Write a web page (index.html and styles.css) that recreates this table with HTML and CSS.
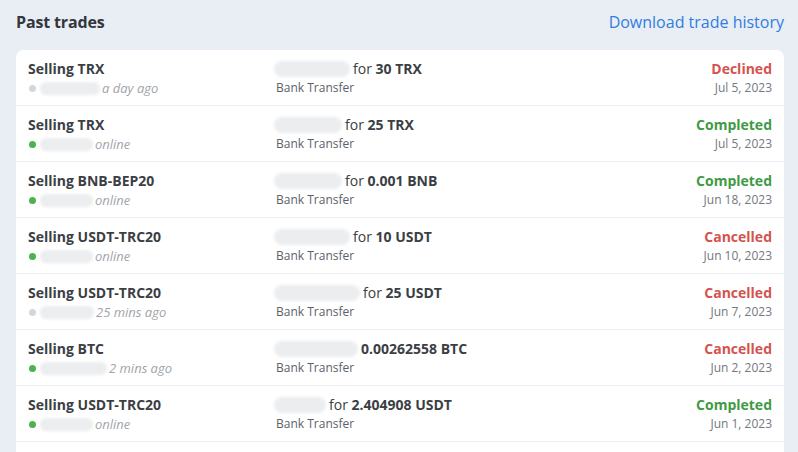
FILE: index.html
```html
<!DOCTYPE html>
<html>
<head>
<meta charset="utf-8">
<link rel="stylesheet" href="styles.css">
</head>
<body>
<div class="page">
  <div class="header">
    <h2 class="title">Past trades</h2>
    <a class="download">Download trade history</a>
  </div>
  <div class="card">
    <div class="row">
      <div class="col-a">
        <div class="pair">Selling TRX</div>
        <div class="user"><span class="dot off"></span><span class="blur" style="width:60px"></span><span class="seen">a day ago</span></div>
      </div>
      <div class="col-b">
        <div class="amount"><span class="blur big" style="width:76px"></span>for <b>30 TRX</b></div>
        <div class="method">Bank Transfer</div>
      </div>
      <div class="col-c">
        <div class="status red">Declined</div>
        <div class="date">Jul 5, 2023</div>
      </div>
    </div>
    <div class="row">
      <div class="col-a">
        <div class="pair">Selling TRX</div>
        <div class="user"><span class="dot on"></span><span class="blur" style="width:53px"></span><span class="seen">online</span></div>
      </div>
      <div class="col-b">
        <div class="amount"><span class="blur big" style="width:68px"></span>for <b>25 TRX</b></div>
        <div class="method">Bank Transfer</div>
      </div>
      <div class="col-c">
        <div class="status green">Completed</div>
        <div class="date">Jul 5, 2023</div>
      </div>
    </div>
    <div class="row">
      <div class="col-a">
        <div class="pair">Selling BNB-BEP20</div>
        <div class="user"><span class="dot on"></span><span class="blur" style="width:53px"></span><span class="seen">online</span></div>
      </div>
      <div class="col-b">
        <div class="amount"><span class="blur big" style="width:68px"></span>for <b>0.001 BNB</b></div>
        <div class="method">Bank Transfer</div>
      </div>
      <div class="col-c">
        <div class="status green">Completed</div>
        <div class="date">Jun 18, 2023</div>
      </div>
    </div>
    <div class="row">
      <div class="col-a">
        <div class="pair">Selling USDT-TRC20</div>
        <div class="user"><span class="dot on"></span><span class="blur" style="width:53px"></span><span class="seen">online</span></div>
      </div>
      <div class="col-b">
        <div class="amount"><span class="blur big" style="width:76px"></span>for <b>10 USDT</b></div>
        <div class="method">Bank Transfer</div>
      </div>
      <div class="col-c">
        <div class="status red">Cancelled</div>
        <div class="date">Jun 10, 2023</div>
      </div>
    </div>
    <div class="row">
      <div class="col-a">
        <div class="pair">Selling USDT-TRC20</div>
        <div class="user"><span class="dot off"></span><span class="blur" style="width:54px"></span><span class="seen">25 mins ago</span></div>
      </div>
      <div class="col-b">
        <div class="amount"><span class="blur big" style="width:86px"></span>for <b>25 USDT</b></div>
        <div class="method">Bank Transfer</div>
      </div>
      <div class="col-c">
        <div class="status red">Cancelled</div>
        <div class="date">Jun 7, 2023</div>
      </div>
    </div>
    <div class="row">
      <div class="col-a">
        <div class="pair">Selling BTC</div>
        <div class="user"><span class="dot on"></span><span class="blur" style="width:67px"></span><span class="seen">2 mins ago</span></div>
      </div>
      <div class="col-b">
        <div class="amount"><span class="blur big" style="width:84px"></span><b>0.00262558 BTC</b></div>
        <div class="method">Bank Transfer</div>
      </div>
      <div class="col-c">
        <div class="status red">Cancelled</div>
        <div class="date">Jun 2, 2023</div>
      </div>
    </div>
    <div class="row">
      <div class="col-a">
        <div class="pair">Selling USDT-TRC20</div>
        <div class="user"><span class="dot on"></span><span class="blur" style="width:53px"></span><span class="seen">online</span></div>
      </div>
      <div class="col-b">
        <div class="amount"><span class="blur big" style="width:52px"></span>for <b>2.404908 USDT</b></div>
        <div class="method">Bank Transfer</div>
      </div>
      <div class="col-c">
        <div class="status green">Completed</div>
        <div class="date">Jun 1, 2023</div>
      </div>
    </div>
    <div class="more"></div>
  </div>
</div>
</body>
</html>
```

FILE: styles.css
```css
html, body {
  margin: 0;
  padding: 0;
  background: #e9eef5;
  overflow: hidden;
  height: 452px;
}
body {
  font-family: "Open Sans", "Noto Sans", sans-serif;
  color: #3b3f45;
}
.page {
  padding: 0 14px 0 16px;
}
.header {
  display: flex;
  justify-content: space-between;
  align-items: center;
  height: 44px;
  margin-bottom: 6px;
}
.title {
  margin: 0;
  font-size: 16px;
  font-weight: 700;
  color: #33373d;
  line-height: 24px;
  letter-spacing: -0.15px;
}
.download {
  font-size: 16px;
  color: #2f7de1;
  line-height: 24px;
  cursor: pointer;
}
.card {
  background: #fff;
  border-radius: 8px 8px 0 0;
  overflow: hidden;
}
.row {
  display: grid;
  grid-template-columns: 248px 1fr auto;
  padding: 9px 12px 8px 12px;
  border-bottom: 1px solid #edf0f4;
}
.more {
  height: 40px;
}
.pair {
  font-size: 14px;
  font-weight: 700;
  line-height: 20px;
  color: #3b3f45;
}
.user {
  display: flex;
  align-items: center;
  height: 18px;
}
.dot {
  width: 7px;
  height: 7px;
  border-radius: 50%;
  margin: 0 4px 0 1px;
  flex: none;
}
.dot.on { background: #4cb34f; }
.dot.off { background: #d4d6d9; }
.blur {
  display: inline-block;
  height: 13px;
  background: #ebedef;
  border-radius: 6px;
  filter: blur(1.5px);
  flex: none;
}
.big {
  height: 16px;
  border-radius: 8px;
  vertical-align: -3px;
  margin: 0 3px 0 -2px;
}
.seen {
  font-size: 13px;
  font-style: italic;
  color: #a0a4aa;
  margin-left: 2px;
}
.amount {
  font-size: 14px;
  line-height: 20px;
  color: #3b3f45;
  white-space: nowrap;
}
.amount b { font-weight: 700; }
.method {
  font-size: 12px;
  line-height: 18px;
  color: #5d6168;
}
.col-c {
  text-align: right;
}
.status {
  font-size: 14px;
  font-weight: 700;
  line-height: 20px;
}
.status.red { color: #d4534f; }
.status.green { color: #3f9a45; }
.date {
  font-size: 12px;
  line-height: 18px;
  color: #73777e;
}
```
